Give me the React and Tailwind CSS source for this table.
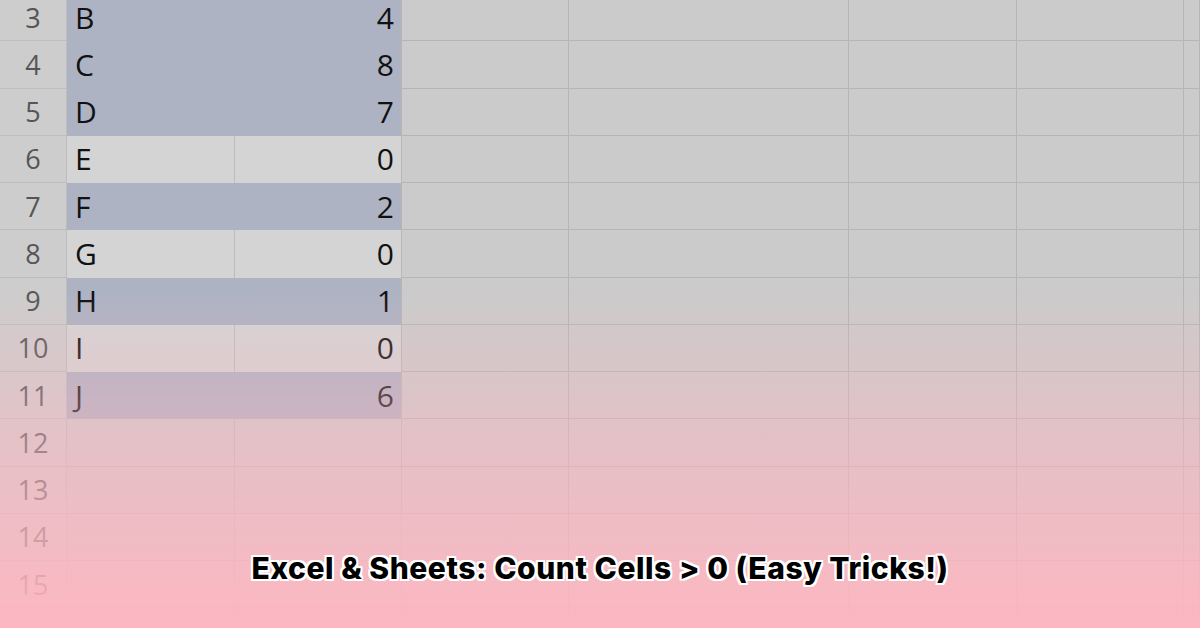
const rows = [
  { n: 3, label: 'B', value: 4, sel: true },
  { n: 4, label: 'C', value: 8, sel: true },
  { n: 5, label: 'D', value: 7, sel: true },
  { n: 6, label: 'E', value: 0, sel: false },
  { n: 7, label: 'F', value: 2, sel: true },
  { n: 8, label: 'G', value: 0, sel: false },
  { n: 9, label: 'H', value: 1, sel: true },
  { n: 10, label: 'I', value: 0, sel: false },
  { n: 11, label: 'J', value: 6, sel: true },
  { n: 12 },
  { n: 13 },
  { n: 14 },
  { n: 15 },
  { n: null },
]

// empty columns to the right of the data (C..G)
const rest = ['w-[167px]', 'w-[280px]', 'w-[168px]', 'w-[167px]', 'flex-1']

function Row({ r }) {
  const hasData = r.label !== undefined
  return (
    <div className="flex h-[47.25px] shrink-0 leading-none">
      <div className="w-[67px] shrink-0 flex items-center justify-center border-r border-b border-[#bdbdbd] bg-[#cdcdcd] text-[27px] text-[#555]">
        {r.n}
      </div>
      {hasData && r.sel ? (
        <div className="w-[335px] shrink-0 flex items-center justify-between pl-2 pr-[7px] bg-[#adb3c3] border-r border-[#b7b7b7] text-[30px] text-[#111]">
          <span>{r.label}</span>
          <span>{r.value}</span>
        </div>
      ) : hasData ? (
        <>
          <div className="w-[168px] shrink-0 flex items-center px-2 bg-[#d4d4d4] border-r border-[#bcbcbc] text-[30px] text-[#111]">{r.label}</div>
          <div className="w-[167px] shrink-0 flex items-center justify-end pr-[7px] bg-[#d4d4d4] border-r border-[#b7b7b7] text-[30px] text-[#111]">{r.value}</div>
        </>
      ) : (
        <>
          <div className="w-[168px] shrink-0 border-r border-b border-[#b9b9b9]" />
          <div className="w-[167px] shrink-0 border-r border-b border-[#b9b9b9]" />
        </>
      )}
      {rest.map((w, i) => (
        <div key={i} className={`${w} shrink-0 border-r border-b border-[#b5b5b5]`} />
      ))}
    </div>
  )
}

export default function App() {
  return (
    <div className="relative w-[1200px] h-[628px] overflow-hidden bg-[#cbcbcb] font-['Open_Sans','Noto_Sans',sans-serif]">
      <div className="flex flex-col -mt-[6px]">
        {rows.map((r, i) => <Row key={i} r={r} />)}
      </div>

      <div className="absolute inset-0 bg-[linear-gradient(to_bottom,rgba(255,182,193,0)_46%,rgba(255,182,193,0.55)_75%,rgba(255,182,193,0.97)_100%)]" />

      <div className="absolute left-0 right-0 top-[546px] text-center">
        <span className="font-['Inter',sans-serif] font-extrabold text-[30px] tracking-[0.55px] text-black [text-shadow:-2px_-2px_0_#fff,2px_-2px_0_#fff,-2px_2px_0_#fff,2px_2px_0_#fff,0_2px_0_#fff,0_-2px_0_#fff,2px_0_0_#fff,-2px_0_0_#fff]">
          Excel &amp; Sheets: Count Cells &gt; 0 (Easy Tricks!)
        </span>
      </div>
    </div>
  )
}
